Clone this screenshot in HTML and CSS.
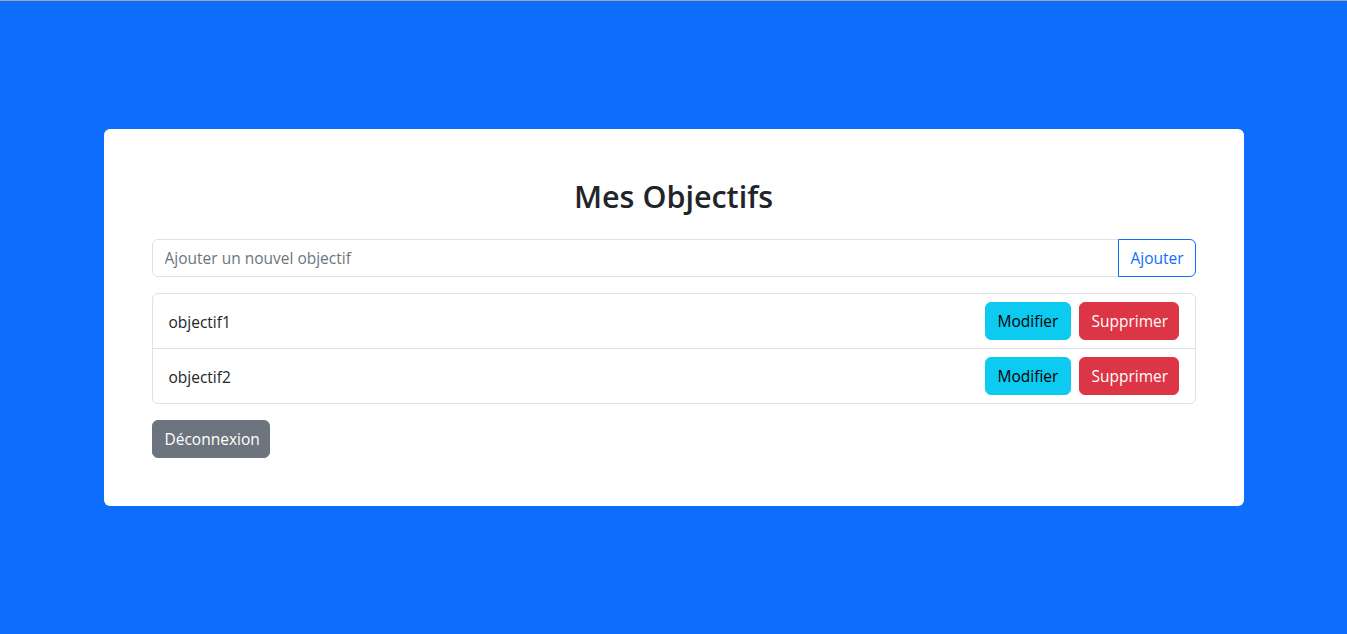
FILE: index.html
```html
<!DOCTYPE html>
<html lang="fr">
<head>
<meta charset="utf-8">
<title>Mes Objectifs</title>
<link rel="stylesheet" href="styles.css">
</head>
<body>
<div class="topline"></div>
<main class="page">
  <section class="card">
    <h2 class="title">Mes Objectifs</h2>
    <form class="input-group">
      <input class="field" type="text" placeholder="Ajouter un nouvel objectif">
      <button class="btn btn-outline" type="button">Ajouter</button>
    </form>
    <ul class="list">
      <li class="item">
        <span class="item-text">objectif1</span>
        <div class="actions">
          <button class="btn btn-info" type="button">Modifier</button>
          <button class="btn btn-danger" type="button">Supprimer</button>
        </div>
      </li>
      <li class="item">
        <span class="item-text">objectif2</span>
        <div class="actions">
          <button class="btn btn-info" type="button">Modifier</button>
          <button class="btn btn-danger" type="button">Supprimer</button>
        </div>
      </li>
    </ul>
    <div><button class="btn btn-secondary" type="button">Déconnexion</button></div>
  </section>
</main>
</body>
</html>
```
FILE: styles.css
```css
* { box-sizing: border-box; }
html, body { margin: 0; padding: 0; }
body {
  background: #0d6efd;
  font-family: "Open Sans", "Noto Sans", sans-serif;
  font-size: 16px;
  line-height: 1.5;
  color: #212529;
  height: 634px;
  display: flex;
  flex-direction: column;
}
.topline { height: 1px; background: #9ea6a4; flex: none; }
.page {
  flex: 1;
  display: flex;
  align-items: center;
  justify-content: center;
}
.card {
  width: 1140px;
  background: #fff;
  border-radius: 6px;
  padding: 48px;
}
.title {
  margin: 0 0 24px;
  text-align: center;
  font-size: 30.5px;
  font-weight: 600;
  line-height: 38.4px;
}
.input-group {
  display: flex;
  margin: 0 0 16px;
}
.field {
  flex: 1;
  height: 38px;
  border: 1px solid #dee2e6;
  border-radius: 6px 0 0 6px;
  padding: 6px 12px;
  font: inherit;
  font-size: 15.5px;
  color: #212529;
  outline: none;
}
.field::placeholder { color: #6c757d; }
.btn {
  height: 38px;
  padding: 6px 12px;
  border: 1px solid transparent;
  border-radius: 6px;
  font-family: inherit;
  font-size: 15.5px;
  line-height: 24px;
  cursor: pointer;
}
.btn-outline {
  width: 78px;
  border-color: #0d6efd;
  color: #0d6efd;
  background: #fff;
  border-radius: 0 6px 6px 0;
  margin-left: -1px;
}
.list {
  list-style: none;
  margin: 0 0 16px;
  padding: 0;
  border: 1px solid #dee2e6;
  border-radius: 6px;
}
.item {
  display: flex;
  align-items: center;
  justify-content: space-between;
  padding: 8px 16px;
}
.item + .item { border-top: 1px solid #dee2e6; }
.item-text { font-size: 15.5px; padding-top: 3px; }
.actions { display: flex; gap: 8px; }
.btn-info { width: 86px; background: #0dcaf0; border-color: #0dcaf0; color: #000; }
.btn-danger { width: 100px; background: #dc3545; border-color: #dc3545; color: #fff; }
.btn-secondary { width: 118px; background: #6c757d; border-color: #6c757d; color: #fff; }
```
